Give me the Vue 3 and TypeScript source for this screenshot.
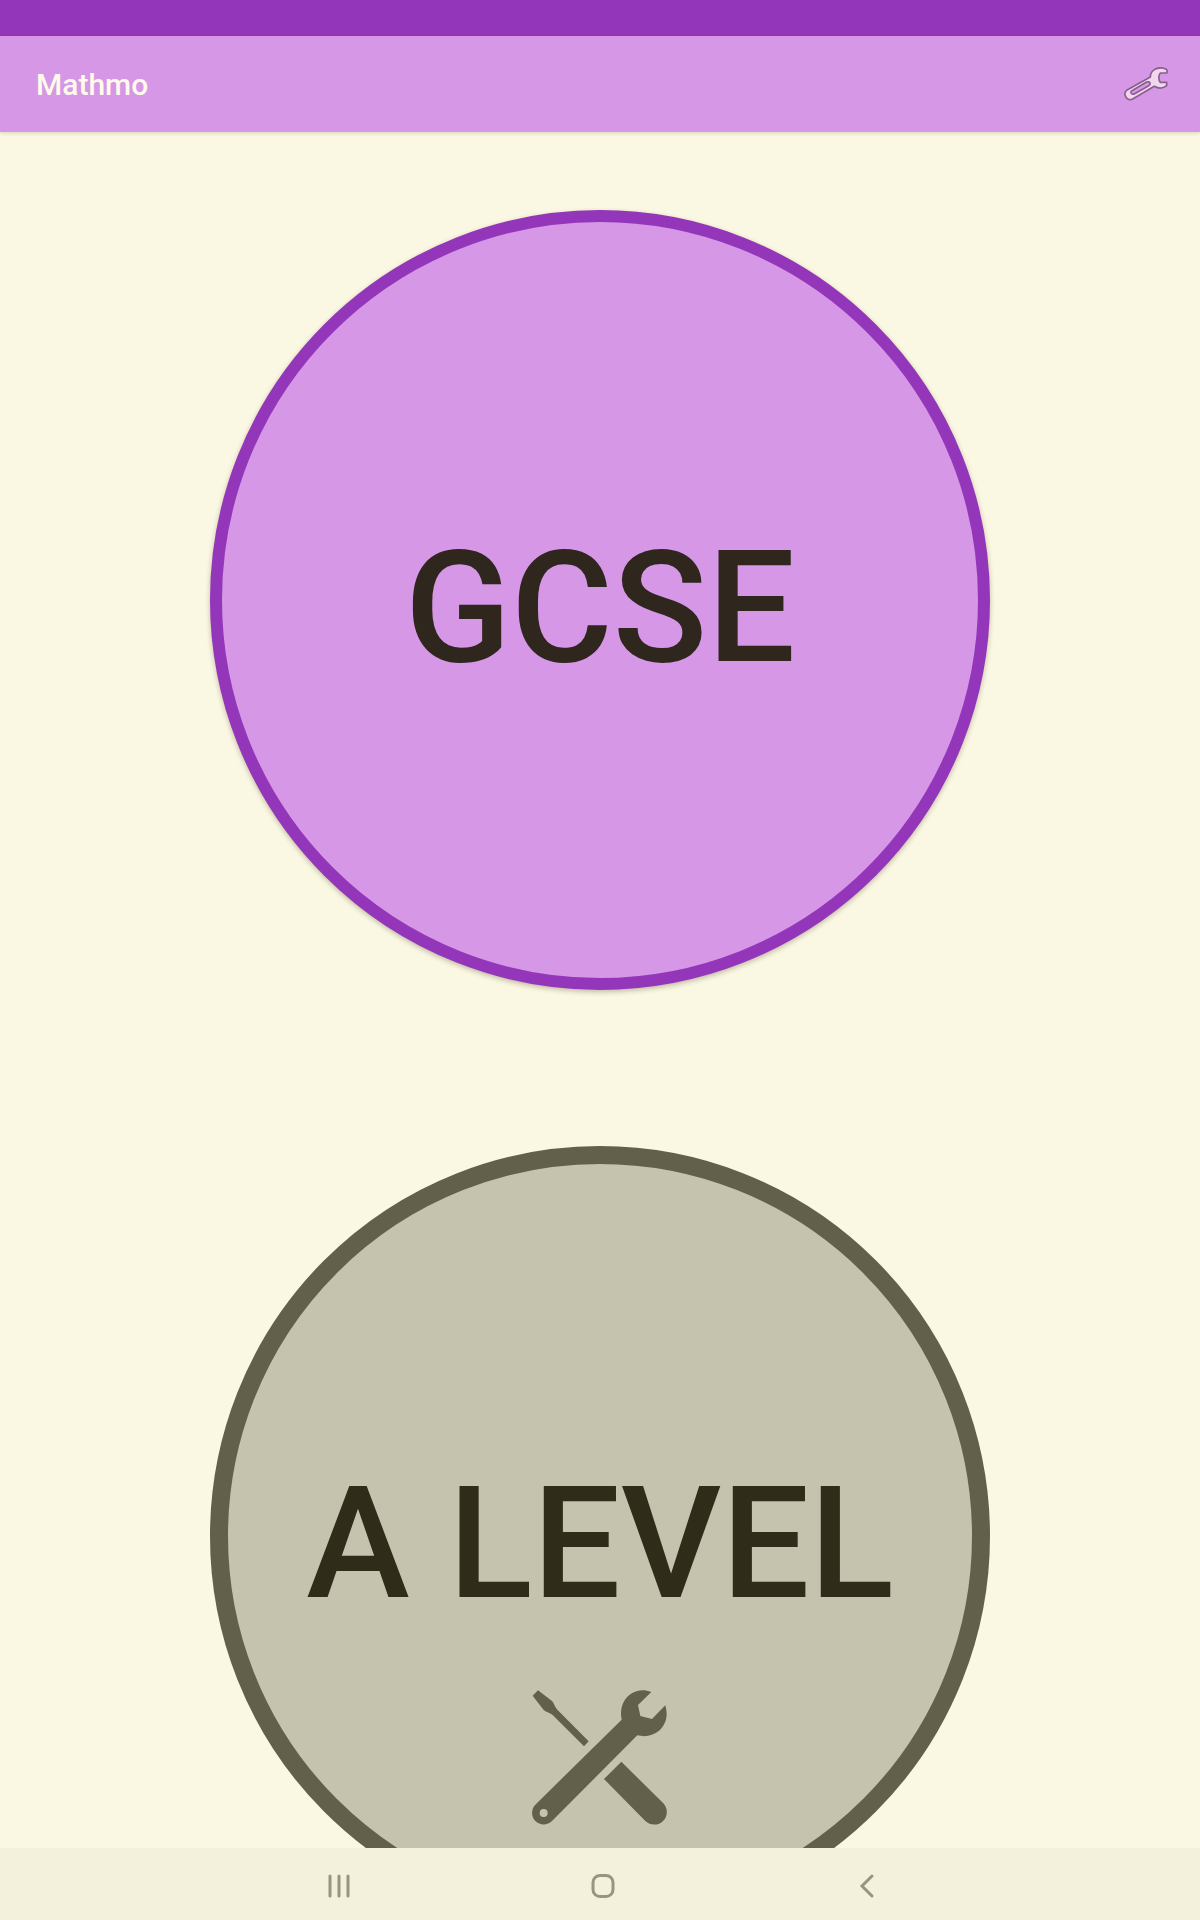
<script setup lang="ts">
interface Level {
  id: string
  label: string
  locked: boolean
}

const levels: Level[] = [
  { id: 'gcse', label: 'GCSE', locked: false },
  { id: 'a-level', label: 'A LEVEL', locked: true },
]
</script>

<template>
  <div class="screen">
    <div class="status-bar"></div>

    <header class="app-bar">
      <h1 class="title">Mathmo</h1>
      <button class="icon-button" type="button" aria-label="Settings">
        <svg class="wrench" viewBox="72 51 138 102" aria-hidden="true">
          <path
            d="M199 58 C189 53 174 52 163 59 C154 65 151 73 151 81 L80 121 C74 126 74 134 77 140 C81 149 91 151 98 147 L163 109 C173 115 188 117 200 107 L200 97 L181 97 C175 91 175 76 181 69 L201 69 L201 60 Z
               M98 121 L140 96 C145 94 149 96 150 99 C151 102 149 105 146 107 L104 131 C99 134 95 133 93 129 C92 126 94 123 98 121 Z"
          />
        </svg>
      </button>
    </header>

    <main class="levels">
      <button
        v-for="level in levels"
        :key="level.id"
        type="button"
        class="level"
        :class="{ locked: level.locked }"
      >
        <span class="label">{{ level.label }}</span>
        <svg v-if="level.locked" class="tools" viewBox="66 60 408 408" aria-hidden="true">
          <path d="M68 77 L84 61 L126 93 C133 101 134 111 142 119 L236 214 L222 229 L128 135 C121 129 109 127 101 120 Z" />
          <path d="M334 275 L460 400 C474 415 474 438 460 452 C446 467 422 468 406 453 L282 327 Z" />
          <path
            fill-rule="evenodd"
            d="M424 66 L384 105 L391 138 L426 147 L466 106 C475 137 468 162 449 181 C431 197 407 202 382 196 L126 453 C112 467 90 467 76 453 C63 440 63 417 76 404 L335 149 C329 121 336 98 352 80 C371 61 397 55 424 66 Z
               M101 417 A12 12 0 1 0 101 441 A12 12 0 1 0 101 417 Z"
          />
        </svg>
      </button>
    </main>

    <nav class="nav-bar" aria-label="System navigation">
      <button class="nav-button" type="button" aria-label="Recent apps">
        <svg viewBox="0 0 26 26" aria-hidden="true"><path d="M4 3V23M13 3V23M22 3V23" /></svg>
      </button>
      <button class="nav-button" type="button" aria-label="Home">
        <svg viewBox="0 0 26 26" aria-hidden="true">
          <rect x="3" y="2.5" width="20" height="21" rx="7" />
        </svg>
      </button>
      <button class="nav-button" type="button" aria-label="Back">
        <svg viewBox="0 0 26 26" aria-hidden="true"><path d="M18 3L8 13L18 23" /></svg>
      </button>
    </nav>
  </div>
</template>

<style>
body {
  background: #faf7e2;
}
</style>

<style scoped>
.screen {
  display: flex;
  flex-direction: column;
  height: 100vh;
  background: #faf7e2;
  font-family: Roboto, "Liberation Sans", sans-serif;
}

button {
  padding: 0;
  border: 0;
  background: none;
  font: inherit;
  color: inherit;
  cursor: pointer;
}

svg {
  display: block;
}

.status-bar {
  flex: none;
  height: 36px;
  background: #9436b9;
}

.app-bar {
  position: relative;
  z-index: 1;
  display: flex;
  flex: none;
  align-items: center;
  justify-content: space-between;
  height: 96px;
  padding: 0 30px 0 36px;
  background: #d597e6;
  box-shadow: 0 1px 4px rgba(60, 50, 20, 0.18);
}

.title {
  margin: 0;
  padding-top: 2px;
  font-size: 30px;
  font-weight: 500;
  line-height: 36px;
  color: #fffaea;
}

.wrench {
  width: 46px;
  height: 34px;
  fill: #f0d8ec;
  stroke: #8a5f90;
  stroke-width: 5;
  stroke-linejoin: round;
}

.levels {
  flex: 1;
  min-height: 0;
  overflow-y: auto;
  scrollbar-width: none;
}

.level {
  display: grid;
  grid-template-rows: 1fr auto 1fr;
  justify-items: center;
  box-sizing: border-box;
  width: 65%;
  aspect-ratio: 1;
  margin: 6.5% auto 13%;
  border: 12px solid #9436b9;
  border-radius: 50%;
  background: #d597e6;
  box-shadow: 0 2px 5px rgba(60, 50, 20, 0.3);
  color: #2f261e;
}

.level.locked {
  border: 18px solid #62604a;
  background: #c5c2ad;
  box-shadow: none;
  color: #2f2d19;
}

.label {
  grid-row: 2;
  padding-top: 16px;
  font-size: 156px;
  font-weight: 500;
  line-height: 184px;
  white-space: nowrap;
}

.tools {
  grid-row: 3;
  width: 136px;
  height: 136px;
  margin-top: 54px;
  fill: #62604a;
}

.nav-bar {
  display: flex;
  flex: none;
  box-sizing: border-box;
  height: 72px;
  padding: 3px 201px 0 207px;
  background: #f3f0dc;
}

.nav-button {
  display: flex;
  flex: 1;
  align-items: center;
  justify-content: center;
}

.nav-button svg {
  width: 26px;
  height: 26px;
  fill: none;
  stroke: #979580;
  stroke-width: 3;
  stroke-linecap: round;
}
</style>
